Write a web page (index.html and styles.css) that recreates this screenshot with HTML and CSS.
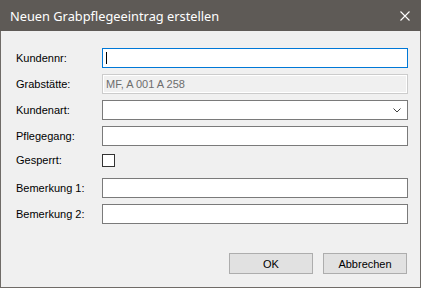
FILE: index.html
```html
<!doctype html>
<html lang="de">
  <head>
    <meta charset="UTF-8" />
    <title>Neuen Grabpflegeeintrag erstellen</title>
    <link rel="stylesheet" href="styles.css">
  </head>
  <body>
    <div class="window">
      <div class="titlebar">
        <span class="title">Neuen Grabpflegeeintrag erstellen</span>
        <svg class="close" width="10" height="10" viewBox="0 0 10 10">
          <path d="M0.5 0.5 L9.5 9.5 M9.5 0.5 L0.5 9.5" stroke="#fff" stroke-width="1.1" fill="none" />
        </svg>
      </div>

      <div class="form">
        <label class="label">Kundennr:</label>
        <div class="field focused"><span class="caret"></span></div>

        <label class="label">Grabstätte:</label>
        <div class="field disabled">MF, A 001 A 258</div>

        <label class="label">Kundenart:</label>
        <div class="field combo">
          <svg class="arrow" width="8" height="5" viewBox="0 0 8 5">
            <path d="M0.5 0.5 L4 4 L7.5 0.5" stroke="#404040" stroke-width="1" fill="none" />
          </svg>
        </div>

        <label class="label">Pflegegang:</label>
        <div class="field"></div>

        <label class="label short">Gesperrt:</label>
        <div class="check-cell short"><span class="checkbox"></span></div>

        <label class="label">Bemerkung 1:</label>
        <div class="field"></div>

        <label class="label">Bemerkung 2:</label>
        <div class="field"></div>
      </div>

      <div class="buttons">
        <button class="btn">OK</button>
        <button class="btn">Abbrechen</button>
      </div>
    </div>
  </body>
</html>
```

FILE: styles.css
```css
* {
  margin: 0;
  padding: 0;
  box-sizing: border-box;
}

body {
  font-family: 'Liberation Sans', Arial, sans-serif;
  font-size: 11px;
  color: #000;
  background: #f0f0f0;
}

.window {
  width: 421px;
  height: 288px;
  display: flex;
  flex-direction: column;
  background: #f0f0f0;
  border: 1px solid #6f6b67;
  border-top: none;
}

.titlebar {
  height: 31px;
  margin: 0 -1px;
  background: #5e5a56;
  display: flex;
  align-items: center;
  justify-content: space-between;
  padding: 0 11px 0 10px;
}

.title {
  font-family: 'Noto Sans', 'Open Sans', sans-serif;
  font-size: 12.8px;
  color: #fff;
}

.close {
  display: block;
}

.form {
  display: grid;
  grid-template-columns: 86px 306px;
  grid-auto-rows: 20px;
  row-gap: 6px;
  padding: 17px 0 0 15px;
}

.form .short {
  height: 16px;
  margin-bottom: -4px;
}

.label {
  display: flex;
  align-items: center;
}

.field {
  position: relative;
  background: #fff;
  border: 1px solid #7a7a7a;
  display: flex;
  align-items: center;
  padding-left: 3px;
}

.field.focused {
  border-color: #0078d7;
}

.caret {
  width: 1px;
  height: 12px;
  background: #000;
}

.field.disabled {
  background: #f0f0f0;
  border-color: #cccccc;
  box-shadow: inset 0 0 0 1px #fff;
  color: #6d6d6d;
}

.combo {
  justify-content: flex-end;
  padding-right: 6px;
}

.arrow {
  display: block;
}

.check-cell {
  display: flex;
  align-items: center;
}

.checkbox {
  width: 13px;
  height: 13px;
  background: #fff;
  border: 1px solid #333;
}

.buttons {
  margin-top: auto;
  display: flex;
  justify-content: flex-end;
  gap: 10px;
  padding: 0 13px 13px 0;
}

.btn {
  width: 84px;
  height: 21px;
  background: #e1e1e1;
  border: 1px solid #adadad;
  font-family: 'Liberation Sans', Arial, sans-serif;
  font-size: 11px;
  color: #000;
}
```
